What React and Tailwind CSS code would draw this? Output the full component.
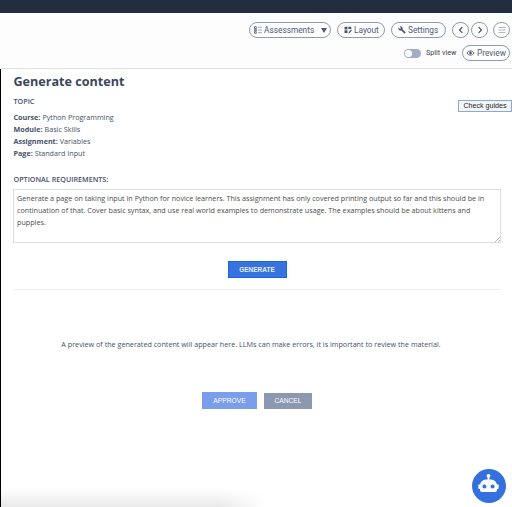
function ListIcon() {
  return (
    <svg viewBox="0 0 8 8" className="h-2 w-2 shrink-0" fill="none" stroke="currentColor" strokeWidth=".8">
      <path d="M.5 .8h1.8v1.8H.5zM.5 3.3h1.8v1.6H.5zM.5 5.7h1.8v1.6H.5z" />
      <path d="M3.8 1.3H8M3.8 4H8M3.8 6.7H8" opacity=".65" />
    </svg>
  );
}

function LayoutIcon() {
  return (
    <svg viewBox="0 0 8 8" className="h-2 w-2 shrink-0" fill="currentColor">
      <path d="M.5 .8h3v2.8h-3zM4.3 .8h3v2.2h-3zM.5 4.3h3v2.8h-3z" />
      <path d="M4.400 7.400l.3-1.500L7 3.400l1 .9-2.400 2.600z" />
    </svg>
  );
}

function WrenchIcon() {
  return (
    <svg viewBox="0 0 24 24" className="h-2 w-2 shrink-0" fill="currentColor">
      <path d="M22.700 19l-9.100-9.100c.9-2.300.4-5-1.500-6.900-2-2-5-2.400-7.400-1.300L9 6 6 9 1.600 4.700C.4 7.100.9 10.100 2.900 12.100c1.900 1.900 4.600 2.400 6.900 1.500l9.100 9.100c.4.4 1 .4 1.400 0l2.300-2.300c.5-.4.5-1.100.1-1.400z" />
    </svg>
  );
}

function EyeIcon() {
  return (
    <svg viewBox="0 0 9 8" className="h-2 w-[9px] shrink-0" fill="none" stroke="currentColor" strokeWidth="1">
      <path d="M1 4C2.400 1.200 6.600 1.200 8 4 6.600 6.800 2.400 6.800 1 4z" />
      <circle cx="4.500" cy="4" r=".9" fill="currentColor" />
    </svg>
  );
}

function Chevron({ d }) {
  return (
    <svg viewBox="0 0 8 8" className="h-2 w-2" fill="none" stroke="currentColor" strokeWidth="1.2">
      <path d={d} />
    </svg>
  );
}

const pill =
  "flex h-4 shrink-0 items-center rounded-full border border-[#8e9ab0] bg-white text-[8.3px] leading-none whitespace-nowrap text-[#4b5975]";
const round =
  "flex h-4 w-[17px] shrink-0 items-center justify-center rounded-full border border-[#8e9ab0] text-[#3f4f6e]";

function Toolbar() {
  return (
    <div className="h-14 shrink-0 border-b border-[#dfe1e7] bg-[#fdfdfe] pr-0.5 font-[Roboto,sans-serif]">
      <div className="flex h-[25px] items-end justify-end">
        <button className={`${pill} mr-1.5 w-[82px] pl-1`}>
          <ListIcon />
          <span className="ml-0.5">Assessments</span>
          <svg viewBox="0 0 6 5" className="mt-px mr-[3px] ml-auto h-[5px] w-1.5" fill="currentColor">
            <path d="M0 0h6L3 5z" />
          </svg>
        </button>
        <button className={`${pill} mr-1.5 w-12 pl-1.5`}>
          <LayoutIcon />
          <span className="ml-0.5">Layout</span>
        </button>
        <button className={`${pill} mr-1.5 w-[55px] pl-1.5`}>
          <WrenchIcon />
          <span className="ml-0.5">Settings</span>
        </button>
        <div className="flex h-4 items-center">
          <button className={`${round} mr-0.5`}>
            <Chevron d="M5.300 1.200 2.600 4l2.700 2.800" />
          </button>
          <button className={`${round} mr-[5px]`}>
            <Chevron d="M2.700 1.200 5.400 4 2.700 6.800" />
          </button>
          <button className={round}>
            <svg viewBox="0 0 8 8" className="h-2 w-2" stroke="#a1a7b5" strokeWidth=".8">
              <path d="M.5 1.500h7M.5 4h7M.5 6.500h7" />
            </svg>
          </button>
        </div>
      </div>
      <div className="flex h-[30px] items-center justify-end">
        <span className="mr-[5px] flex h-[9px] w-[17px] items-center rounded-full bg-[#a4adc3] p-px">
          <span className="h-[7px] w-[7px] rounded-full bg-white" />
        </span>
        <span className="mr-1.5 w-[30px] text-[7.2px] leading-none whitespace-nowrap text-[#3c4252]">Split view</span>
        <button className={`${pill} w-12 pl-[3px]`}>
          <EyeIcon />
          <span className="ml-0.5">Preview</span>
        </button>
      </div>
    </div>
  );
}

const details = [
  ["Course:", "Python Programming"],
  ["Module:", "Basic Skills"],
  ["Assignment:", "Variables"],
  ["Page:", "Standard Input"],
];

function Robot() {
  return (
    <button className="absolute top-[469px] left-[472px] flex h-[34px] w-[34px] items-center justify-center rounded-full bg-[#3471df]">
      <svg viewBox="0 0 34 34" className="h-[34px] w-[34px]">
        <circle cx="16.500" cy="6.800" r="1.900" fill="white" />
        <path d="M15.600 7h1.800v5h-1.800z" fill="white" />
        <path d="M8 21v-4.500a6 6 0 0 1 6-6h5a6 6 0 0 1 6 6V21a2 2 0 0 1-2 2h-13a2 2 0 0 1-2-2z" fill="white" />
        <path d="M6.300 15.500h2.500V20H7.300a1 1 0 0 1-1-1zM24.200 15.500h2.500V19a1 1 0 0 1-1 1h-1.500z" fill="white" />
        <circle cx="12.400" cy="17.500" r="2" fill="#3471df" />
        <circle cx="20.600" cy="17.500" r="2" fill="#3471df" />
      </svg>
    </button>
  );
}

export default function App() {
  return (
    <div className="relative flex h-[507px] w-[512px] flex-col overflow-hidden bg-white font-['Open_Sans',sans-serif] text-[#46516a]">
      <header className="h-[13px] shrink-0 bg-[#222d40]" />
      <Toolbar />
      <main className="min-h-0 flex-1 border-l border-black pr-[11px] pl-3">
        <h1 className="pt-1 pl-[0.5px] text-[12.6px] leading-[18px] font-bold text-[#3a465e]">Generate content</h1>
        <div className="mt-[5px] flex items-start justify-between">
          <h2 className="pl-[0.5px] text-[7.2px] leading-[10px] font-semibold">TOPIC</h2>
          <button className="mt-1 -mr-[11px] h-3 w-[54px] border border-[#85aade] bg-[#f4f5f7] font-['Liberation_Sans',sans-serif] text-[7.1px] leading-[10px] whitespace-nowrap text-[#222]">
            Check guides
          </button>
        </div>
        <dl className="-mt-[1px] pl-[0.5px] text-[7.2px] leading-3">
          {details.map(([label, value]) => (
            <div key={label} className="flex gap-0.5">
              <dt className="font-bold">{label}</dt>
              <dd>{value}</dd>
            </div>
          ))}
        </dl>
        <label className="mt-[15px] block pl-[0.5px] text-[7.2px] leading-[10px] font-semibold">OPTIONAL REQUIREMENTS:</label>
        <div className="relative mt-[5px] h-[54px] border border-[#dedfe1] px-[3px] pt-[2px] text-[7.19px] leading-3 whitespace-nowrap text-[#4d4d4d]">
          <p>Generate a page on taking input in Python for novice learners. This assignment has only covered printing output so far and this should be in</p>
          <p>continuation of that. Cover basic syntax, and use real world examples to demonstrate usage. The examples should be about kittens and</p>
          <p>puppies.</p>
          <svg viewBox="0 0 5 5" className="absolute right-0 bottom-0 h-[5px] w-[5px]" stroke="#999" strokeWidth=".7">
            <path d="M0 5 5 0M3 5l2-2" />
          </svg>
        </div>
        <div className="flex justify-center pt-[18px]">
          <button className="h-[17px] w-[59px] border border-[#1765df] bg-[#3772df] pt-0.5 font-['Liberation_Sans',sans-serif] text-[6.5px] leading-none font-bold text-[#e7effc]">
            GENERATE
          </button>
        </div>
        <hr className="mt-[11px] border-[#efeff0]" />
        <p className="mt-12 pr-3 text-center text-[7.2px] leading-3 whitespace-nowrap">
          A preview of the generated content will appear here. LLMs can make errors, it is important to review the material.
        </p>
        <div className="mt-[42px] flex items-center justify-center gap-[7px] font-['Liberation_Sans',sans-serif] text-[6.7px] leading-none text-white">
          <button className="h-[17px] w-[55px] bg-[#7a9dec] pt-0.5">APPROVE</button>
          <button className="h-4 w-12 bg-[#8c97b0] pt-0.5">CANCEL</button>
        </div>
      </main>
      <div className="absolute bottom-0 left-px h-[18px] w-[265px] bg-linear-to-t from-black/9 to-transparent mask-r-from-82% mask-r-to-100%" />
      <Robot />
    </div>
  );
}
